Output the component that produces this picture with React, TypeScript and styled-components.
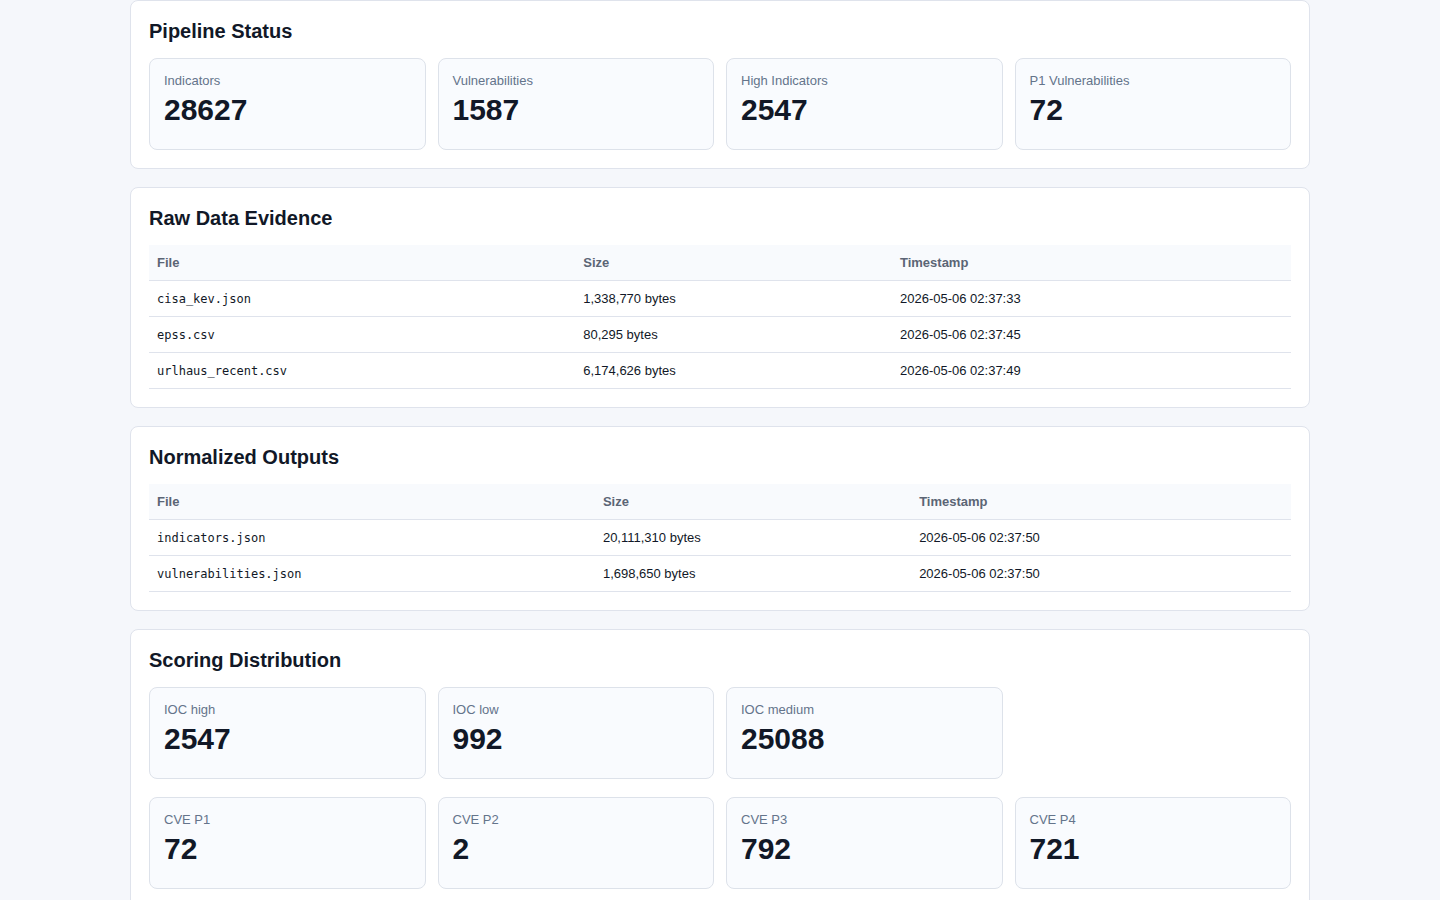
import styled, { createGlobalStyle } from 'styled-components';

const GlobalStyle = createGlobalStyle`
  body {
    margin: 0;
    background: #f5f7fb;
    font-family: "Liberation Sans", Arial, sans-serif;
    color: #111827;
  }
`;

interface Stat {
  label: string;
  value: number;
}

interface FileRow {
  file: string;
  size: string;
  timestamp: string;
}

const pipeline: Stat[] = [
  { label: 'Indicators', value: 28627 },
  { label: 'Vulnerabilities', value: 1587 },
  { label: 'High Indicators', value: 2547 },
  { label: 'P1 Vulnerabilities', value: 72 },
];

const rawFiles: FileRow[] = [
  { file: 'cisa_kev.json', size: '1,338,770 bytes', timestamp: '2026-05-06 02:37:33' },
  { file: 'epss.csv', size: '80,295 bytes', timestamp: '2026-05-06 02:37:45' },
  { file: 'urlhaus_recent.csv', size: '6,174,626 bytes', timestamp: '2026-05-06 02:37:49' },
];

const outputs: FileRow[] = [
  { file: 'indicators.json', size: '20,111,310 bytes', timestamp: '2026-05-06 02:37:50' },
  { file: 'vulnerabilities.json', size: '1,698,650 bytes', timestamp: '2026-05-06 02:37:50' },
];

const iocScores: Stat[] = [
  { label: 'IOC high', value: 2547 },
  { label: 'IOC low', value: 992 },
  { label: 'IOC medium', value: 25088 },
];

const cveScores: Stat[] = [
  { label: 'CVE P1', value: 72 },
  { label: 'CVE P2', value: 2 },
  { label: 'CVE P3', value: 792 },
  { label: 'CVE P4', value: 721 },
];

function StatGrid({ items }: { items: Stat[] }) {
  return (
    <Grid>
      {items.map((s) => (
        <StatCard key={s.label}>
          <StatLabel>{s.label}</StatLabel>
          <StatValue>{s.value}</StatValue>
        </StatCard>
      ))}
    </Grid>
  );
}

function FileTable({ rows }: { rows: FileRow[] }) {
  return (
    <Table>
      <thead>
        <tr>
          <Th>File</Th>
          <Th>Size</Th>
          <Th>Timestamp</Th>
        </tr>
      </thead>
      <tbody>
        {rows.map((r) => (
          <tr key={r.file}>
            <Td $mono>{r.file}</Td>
            <Td>{r.size}</Td>
            <Td>{r.timestamp}</Td>
          </tr>
        ))}
      </tbody>
    </Table>
  );
}

export default function App() {
  return (
    <>
      <GlobalStyle />
      <Page>
        <Section>
          <Title>Pipeline Status</Title>
          <StatGrid items={pipeline} />
        </Section>

        <Section>
          <Title>Raw Data Evidence</Title>
          <FileTable rows={rawFiles} />
        </Section>

        <Section>
          <Title>Normalized Outputs</Title>
          <FileTable rows={outputs} />
        </Section>

        <Section>
          <Title>Scoring Distribution</Title>
          <StatGrid items={iocScores} />
          <StatGrid items={cveScores} />
        </Section>
      </Page>
    </>
  );
}

// Styled Components

const Page = styled.main`
  width: 1180px;
  margin: 0 auto;
  padding-bottom: 24px;
  display: flex;
  flex-direction: column;
  gap: 18px;
`;

const Section = styled.section`
  background: #ffffff;
  border: 1px solid #dfe3ec;
  border-radius: 8px;
  padding: 18px;
  display: flex;
  flex-direction: column;
  gap: 18px;
`;

const Title = styled.h2`
  margin: 0 0 -3px;
  font-size: 20px;
  line-height: 24px;
  font-weight: 700;
  color: #111827;
`;

const Grid = styled.div`
  display: grid;
  grid-template-columns: repeat(4, 1fr);
  gap: 12px;
`;

const StatCard = styled.div`
  background: #f9fbfe;
  border: 1px solid #dde2ea;
  border-radius: 8px;
  padding: 14px 14px 21px;
  display: flex;
  flex-direction: column;
  gap: 3px;
`;

const StatLabel = styled.div`
  font-size: 13px;
  line-height: 16px;
  color: #64748b;
`;

const StatValue = styled.div`
  font-size: 30px;
  line-height: 36px;
  font-weight: 700;
  color: #111827;
`;

const Table = styled.table`
  width: 100%;
  border-collapse: collapse;
  font-size: 13px;
`;

const Th = styled.th`
  text-align: left;
  padding: 10px 8px;
  line-height: 15px;
  background: #f8fafd;
  color: #5b6575;
  font-weight: 700;
  border-bottom: 1px solid #dfe3ec;
`;

const Td = styled.td<{ $mono?: boolean }>`
  padding: ${({ $mono }) => ($mono ? '11px 8px 9px' : '10px 8px')};
  line-height: 15px;
  color: #111827;
  border-bottom: 1px solid #dfe3ec;
  font-family: ${({ $mono }) =>
    $mono ? '"DejaVu Sans Mono", "Liberation Mono", monospace' : 'inherit'};
  font-size: ${({ $mono }) => ($mono ? '12px' : '13px')};
`;
